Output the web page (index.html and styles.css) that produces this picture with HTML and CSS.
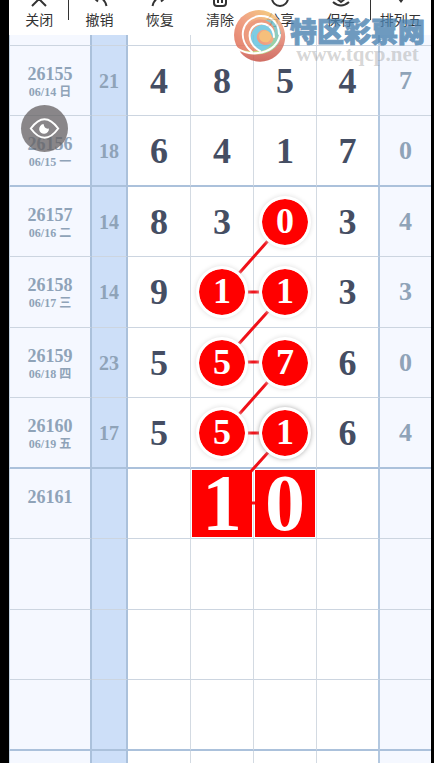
FILE: index.html
```
<!DOCTYPE html>
<html lang="zh-CN">

<head>
    <meta charset="UTF-8">
    <meta name="viewport" content="width=device-width, initial-scale=1.0">
    <title>排列五</title>
    <link rel="stylesheet" href="styles.css">
</head>

<body>
    <div class="app">
        <nav class="toolbar">
            <button class="tool divided"><svg class="icon" viewBox="0 0 24 8"><path d="M5 6 L12 -1 L19 6" /></svg>关闭</button>
            <button class="tool"><svg class="icon" viewBox="0 0 24 8"><path d="M7 -2 L11 1.500 M14 -2 Q18 0 19.500 6" /></svg>撤销</button>
            <button class="tool"><svg class="icon" viewBox="0 0 24 8"><path d="M17 -2 L13 1.500 M10 -2 Q6 0 4.500 6" /></svg>恢复</button>
            <button class="tool"><svg class="icon" viewBox="0 0 24 8"><path d="M6 -2 V3 Q6 6 9 6 H15 Q18 6 18 3 V-2 M10 -2 V3 M14 -2 V3" /></svg>清除</button>
            <button class="tool"><svg class="icon" viewBox="0 0 24 8"><circle cx="12" cy="-2" r="8" /></svg>分享</button>
            <button class="tool divided"><svg class="icon" viewBox="0 0 24 8"><path d="M7 -2 L12 2 L17 -2 M4 2 Q12 9 20 2" /></svg>保存</button>
            <button class="tool"><svg class="icon" viewBox="0 0 24 8"><path class="solid" d="M9 -1 H15 L12 3 Z" /></svg>排列五</button>
        </nav>

        <main class="chart">
            <table class="trend">
                <colgroup>
                    <col class="col-issue">
                    <col class="col-sum">
                    <col span="4">
                    <col class="col-last">
                </colgroup>
                <tbody>
                    <tr class="stub"><th></th><td></td><td></td><td></td><td></td><td></td><td></td></tr>
                    <tr><th>26155<small>06/14 日</small></th><td>21</td><td>4</td><td>8</td><td>5</td><td>4</td><td>7</td></tr>
                    <tr class="group-end"><th>26156<small>06/15 一</small></th><td>18</td><td>6</td><td>4</td><td>1</td><td>7</td><td>0</td></tr>
                    <tr><th>26157<small>06/16 二</small></th><td>14</td><td>8</td><td>3</td><td><span class="ball">0</span></td><td>3</td><td>4</td></tr>
                    <tr><th>26158<small>06/17 三</small></th><td>14</td><td>9</td><td><span class="ball">1</span></td><td><span class="ball">1</span></td><td>3</td><td>3</td></tr>
                    <tr><th>26159<small>06/18 四</small></th><td>23</td><td>5</td><td><span class="ball">5</span></td><td><span class="ball">7</span></td><td>6</td><td>0</td></tr>
                    <tr class="group-end"><th>26160<small>06/19 五</small></th><td>17</td><td>5</td><td><span class="ball">5</span></td><td><span class="ball active">1</span></td><td>6</td><td>4</td></tr>
                    <tr><th class="next">26161</th><td></td><td></td><td><span class="pick">1</span></td><td><span class="pick">0</span></td><td></td><td></td></tr>
                    <tr><th></th><td></td><td></td><td></td><td></td><td></td><td></td></tr>
                    <tr><th></th><td></td><td></td><td></td><td></td><td></td><td></td></tr>
                    <tr class="group-end"><th></th><td></td><td></td><td></td><td></td><td></td><td></td></tr>
                    <tr><th></th><td></td><td></td><td></td><td></td><td></td><td></td></tr>
                </tbody>
            </table>
            <!-- lines between the marked numbers, x runs over the four number columns -->
            <svg class="links">
                <line x1="62.5%" y1="186" x2="37.5%" y2="257" />
                <line x1="37.5%" y1="257" x2="62.5%" y2="257" />
                <line x1="62.5%" y1="257" x2="37.5%" y2="327" />
                <line x1="37.5%" y1="327" x2="62.5%" y2="327" />
                <line x1="62.5%" y1="327" x2="37.5%" y2="398" />
                <line x1="37.5%" y1="398" x2="62.5%" y2="398" />
                <line x1="62.5%" y1="398" x2="37.5%" y2="468" />
                <line x1="37.5%" y1="468" x2="62.5%" y2="468" />
            </svg>
        </main>

        <button class="eye" aria-label="显示">
            <svg viewBox="0 0 48 48">
                <path class="lid" d="M10 24 Q24 5 38 24 Q24 43 10 24 Z" />
                <path class="pupil" d="M23 19.500 A5 5 0 1 0 28.500 24 Q24 25 23 19.500 Z" />
            </svg>
        </button>

        <div class="watermark">
            <svg class="logo" viewBox="0 0 54 54">
                <defs>
                    <linearGradient id="warm" x1="0" y1="1" x2="1" y2="0">
                        <stop offset="0" stop-color="#d9604f" />
                        <stop offset=".5" stop-color="#ee9270" />
                        <stop offset="1" stop-color="#f6d568" />
                    </linearGradient>
                    <linearGradient id="rim" x1="0" y1="0" x2="0" y2="1">
                        <stop offset="0" stop-color="#f3c08a" />
                        <stop offset=".5" stop-color="#e48672" />
                        <stop offset="1" stop-color="#c95549" />
                    </linearGradient>
                    <linearGradient id="cool" x1="0" y1="1" x2="1" y2="0">
                        <stop offset="0" stop-color="#e8e45e" />
                        <stop offset=".5" stop-color="#8fce8c" />
                        <stop offset="1" stop-color="#62b9e2" />
                    </linearGradient>
                </defs>
                <circle cx="27" cy="26" r="25" fill="url(#warm)" />
                <path fill="url(#rim)" d="M38 4 C56 13 58 36 44 47 C33 56 17 54 8 43 C25 49 40 44 46 32 C49 23 47 11 38 4 Z" />
                <path fill="url(#cool)" d="M6 40 C26 46 40 40 42 28 C44 20 39 13 32 11 C42 9 49 17 49 26 C48 42 28 52 6 40 Z" />
                <path fill="#e98a68" d="M24 42 C9 34 10 17 22 12 C31 8 42 13 43 23 C38 14 29 13 23 18 C15 25 18 35 29 42 Z" />
                <path fill="#68c4df" d="M29 42 C16 36 16 22 26 17 C35 13 43 20 41 29 C37 20 31 19 27 23 C22 28 26 35 33 36 Q38 36 40 33 Q37 41 29 42 Z" />
                <path fill="#f5b565" d="M36 33 C27 35 24 25 31 22 C39 20 42 29 36 33 Z" />
                <g fill="none" stroke="#fff" stroke-width="2" stroke-linecap="round">
                    <path d="M20 43 C5 31 9 10 27 7 C40 6 47 15 47 25" />
                    <path d="M28 42 C14 34 15 19 26 15 C35 13 42 19 42 28" />
                    <path d="M3 38 C20 50 44 44 48 26" />
                </g>
            </svg>
            <div class="brand">
                <p class="name">特区彩票网</p>
                <p class="site">www.tqcp.net</p>
            </div>
        </div>
    </div>
</body>

</html>
```
FILE: styles.css
```
* {
  margin: 0;
  padding: 0;
  box-sizing: border-box;
}

html, body {
  height: 100%;
}

body {
  background: #000;
  font-family: "Liberation Serif", "Noto Sans CJK SC", serif;
  overflow: hidden;
}

.app {
  position: relative;
  height: 100%;
  margin: 0 3px 0 9px;
  background: #fff;
  overflow: hidden;
}

.toolbar {
  display: flex;
  height: 35px;
}

.tool {
  position: relative;
  flex: 1;
  display: flex;
  flex-direction: column;
  align-items: center;
  gap: 2px;
  border: none;
  background: none;
  font-family: "Liberation Sans", "Noto Sans CJK SC", sans-serif;
  font-size: 14px;
  line-height: 20px;
  color: #333;
  white-space: nowrap;
  cursor: pointer;
}

.tool.divided::after {
  content: "";
  position: absolute;
  top: 0;
  right: 0;
  width: 1px;
  height: 20px;
  background: #333;
}

.icon {
  width: 24px;
  height: 8px;
  fill: none;
  stroke: #333;
  stroke-width: 2;
}

.icon .solid {
  fill: #333;
  stroke: none;
}

.chart {
  position: relative;
}

.trend {
  width: 100%;
  table-layout: fixed;
  border-collapse: separate;
  border-spacing: 0;
}

.col-issue {
  width: 83px;
}

.col-sum {
  width: 36px;
}

.col-last {
  width: 51px;
}

.trend tr {
  height: 70px;
}

.trend tr:nth-child(odd) {
  height: 71px;
}

.trend tr.stub {
  height: 11px;
}

.trend th,
.trend td {
  border-right: 1px solid #d3dae2;
  border-bottom: 1px solid #ccd5e0;
  text-align: center;
  vertical-align: middle;
  font-size: 36px;
  font-weight: bold;
  line-height: 40px;
  color: #454e63;
}

.trend th {
  padding-top: 2px;
  border-left: 1px solid #c3d3e2;
  border-right: 2px solid #abc1db;
  background: #f5f8ff;
  font-size: 18px;
  line-height: 20px;
  color: #8fa3b8;
}

.trend th.next {
  padding-bottom: 16px;
}

.trend small {
  display: block;
  font-size: 12px;
  line-height: 16px;
}

.trend td:nth-child(2) {
  border-right: 2px solid #abc1db;
  background: #cddff8;
  font-size: 20px;
  color: #8fa3b8;
}

.trend td:nth-child(6) {
  border-right: 2px solid #b3c8e0;
}

.trend td:nth-child(7) {
  border-right: none;
  background: #f5f8ff;
  font-size: 26px;
  color: #8fa3b8;
}

.trend .group-end th,
.trend .group-end td {
  border-bottom: 2px solid #abc1db;
}

.links {
  position: absolute;
  top: 0;
  left: 119px;
  width: calc(100% - 170px);
  height: 100%;
  stroke: #f01018;
  stroke-width: 3;
}

.ball {
  position: relative;
  z-index: 1;
  display: block;
  width: 52px;
  height: 52px;
  margin: 0 auto;
  border: 3px solid #fff;
  border-radius: 50%;
  background: #f00;
  background-clip: padding-box;
  box-shadow: 0 0 5px #ddd;
  line-height: 44px;
  color: #fff;
}

.ball.active {
  box-shadow: 0 0 5px #aaa;
}

.pick {
  position: relative;
  z-index: 1;
  display: block;
  height: 67px;
  margin: 0 1px;
  background: #f00;
  font-size: 80px;
  line-height: 67px;
  color: #fff;
}

.eye {
  position: absolute;
  top: 105px;
  left: 12px;
  z-index: 2;
  width: 47px;
  height: 47px;
  border: none;
  border-radius: 50%;
  background: rgba(100, 96, 98, 0.75);
  cursor: pointer;
}

.eye svg {
  display: block;
}

.lid {
  fill: none;
  stroke: #fff;
  stroke-width: 2;
}

.pupil {
  fill: #fff;
}

.watermark {
  position: absolute;
  top: 9px;
  right: 6px;
  z-index: 2;
  display: flex;
  gap: 4px;
  pointer-events: none;
}

.logo {
  width: 54px;
  height: 54px;
  opacity: 0.85;
}

.brand {
  padding-top: 7px;
}

.name {
  font-family: "Noto Sans CJK SC", sans-serif;
  font-size: 27px;
  font-weight: 900;
  line-height: 30px;
  color: #4b82b0;
  -webkit-text-stroke: 1px #4b82b0;
  opacity: 0.8;
}

.site {
  font-size: 21px;
  font-weight: bold;
  line-height: 16px;
  text-align: center;
  color: rgba(150, 150, 150, 0.4);
}
```
